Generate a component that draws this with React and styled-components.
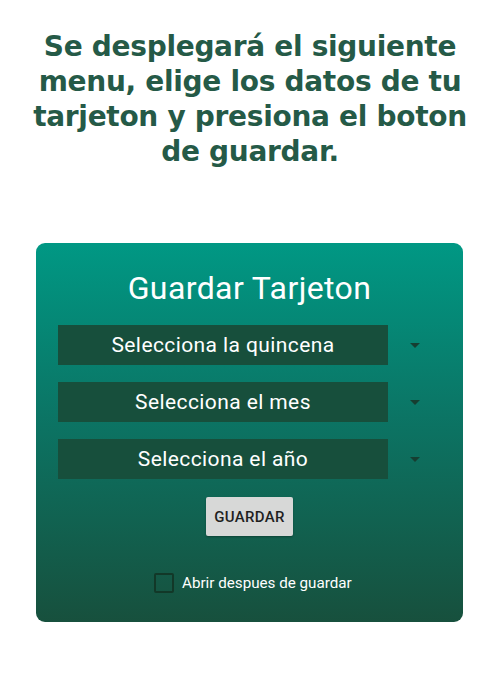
import React, { useState } from "react";
import styled, { createGlobalStyle } from "styled-components";

const GlobalStyle = createGlobalStyle`
  body {
    margin: 0;
    background: #ffffff;
    font-family: Roboto, "Liberation Sans", sans-serif;
  }
`;

const headingLines = [
  "Se desplegará el siguiente",
  "menu, elige los datos de tu",
  "tarjeton y presiona el boton",
  "de guardar.",
];

const fields = [
  "Selecciona la quincena",
  "Selecciona el mes",
  "Selecciona el año",
];

export default function App() {
  const [openAfter, setOpenAfter] = useState(false);

  return (
    <PageCss>
      <GlobalStyle />
      <Heading>
        {headingLines.map((line) => (
          <HeadingLine key={line}>{line}</HeadingLine>
        ))}
      </Heading>

      <Card>
        <Title>Guardar Tarjeton</Title>
        {fields.map((label) => (
          <SelectRow key={label}>
            <SelectBox>{label}</SelectBox>
            <Caret />
          </SelectRow>
        ))}
        <SaveButton>GUARDAR</SaveButton>
        <CheckRow onClick={() => setOpenAfter(!openAfter)}>
          <CheckBox checked={openAfter} />
          <span>Abrir despues de guardar</span>
        </CheckRow>
      </Card>
    </PageCss>
  );
}

const PageCss = styled.div`
  width: 500px;
  height: 700px;
  overflow: hidden;
`;

const Heading = styled.h1`
  margin: 0;
  padding-top: 29px;
  text-align: center;
  font-family: "DejaVu Sans", sans-serif;
  font-weight: 700;
  font-size: 28px;
  letter-spacing: -0.3px;
  color: #255a47;
`;

const HeadingLine = styled.div`
  height: 35px;
  line-height: 35px;
  white-space: nowrap;
`;

const Card = styled.div`
  margin: 74px 0 0 36px;
  width: 427px;
  height: 379px;
  box-sizing: border-box;
  border-radius: 9px;
  background: linear-gradient(to bottom, #009884 0%, #0b7565 45%, #17503d 100%);
  padding: 27px 0 0 22px;
  display: flex;
  flex-direction: column;
  color: #ffffff;
`;

const Title = styled.div`
  width: 383px;
  text-align: center;
  font-size: 32px;
  letter-spacing: 0.4px;
  line-height: 36px;
  margin-bottom: 19px;
`;

const SelectRow = styled.div`
  display: flex;
  align-items: center;
  margin-bottom: 17px;
`;

const SelectBox = styled.div`
  width: 330px;
  height: 40px;
  background: #174f3c;
  display: flex;
  align-items: center;
  justify-content: center;
  font-size: 21px;
  letter-spacing: 0.4px;
`;

const Caret = styled.div`
  margin-left: 22px;
  width: 0;
  height: 0;
  border-left: 5px solid transparent;
  border-right: 5px solid transparent;
  border-top: 5px solid #163e31;
`;

const SaveButton = styled.button`
  align-self: flex-start;
  margin: 1px 0 0 148px;
  width: 87px;
  height: 39px;
  padding: 0;
  border: none;
  border-radius: 2px;
  background: #d7d8d7;
  box-shadow: 0 1px 2px rgba(0, 0, 0, 0.3);
  font-family: Roboto, sans-serif;
  font-weight: 500;
  font-size: 15px;
  letter-spacing: 0.3px;
  color: #1f1f1f;
`;

const CheckRow = styled.label`
  display: flex;
  align-items: center;
  margin: 37px 0 0 96px;
  font-size: 15.2px;
  cursor: pointer;
`;

const CheckBox = styled.span`
  width: 16px;
  height: 16px;
  border: 2px solid #123828;
  border-radius: 2px;
  margin-right: 8px;
  background: ${(props) => (props.checked ? "#123828" : "transparent")};
`;
